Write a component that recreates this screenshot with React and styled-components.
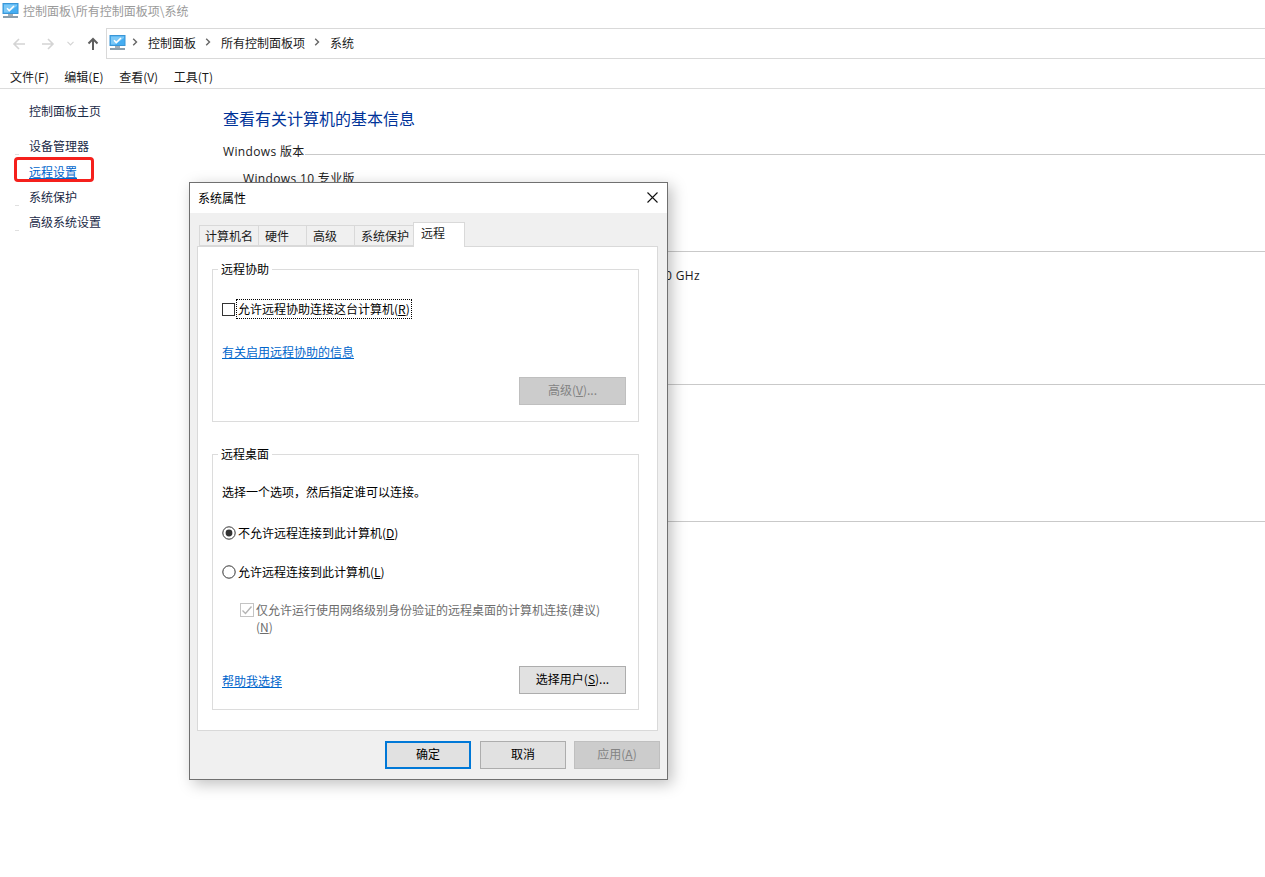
import React from 'react';
import styled, { createGlobalStyle } from 'styled-components';

const Global = createGlobalStyle`
  html, body { margin: 0; padding: 0; background: #fff; }
  body { font-family: "Noto Sans CJK SC", "Liberation Sans", sans-serif; font-size: 12px; color: #1a1a1a; }
  * { box-sizing: border-box; }
`;

const Page = styled.div`
  position: relative;
  width: 1265px;
  height: 877px;
  overflow: hidden;
  background: #fff;
`;

const TitleBar = styled.div`
  height: 28px;
  display: flex;
  align-items: center;
  gap: 4px;
  padding: 0 0 6px 2px;
  color: #9a9a9a;
  line-height: 16px;
`;

const NavBar = styled.div`
  height: 31px;
  display: flex;
  align-items: stretch;
`;

const NavButtons = styled.div`
  width: 106px;
  display: flex;
  align-items: center;
  padding-left: 12px;
`;

const NavIcon = styled.svg`
  display: block;
  flex: none;
  margin-right: ${(p) => p.$gap}px;
`;

const AddressBox = styled.div`
  flex: 1;
  display: flex;
  align-items: center;
  border: 1px solid #d9d9d9;
  border-right: 0;
  padding: 0 0 3px 2px;
  color: #1a1a1a;
`;

const AddressIcon = styled.span`
  display: block;
  margin-top: 2px;
`;

const Crumb = styled.span`
  margin-right: 9px;
`;

const CrumbArrow = styled.svg`
  display: block;
  flex: none;
  margin: 0 ${(p) => p.$after}px 0 ${(p) => p.$before}px;
`;

const MenuBar = styled.div`
  height: 30px;
  display: flex;
  align-items: center;
  gap: 15.6px;
  padding: 5px 0 0 10px;
  border-bottom: 1px solid #dcdcdc;
  font-size: 12px;
`;

const Content = styled.div`
  display: flex;
`;

const Sidebar = styled.nav`
  width: 223px;
  flex: none;
  padding: 13px 0 0 29px;
  display: flex;
  flex-direction: column;
`;

const SideItem = styled.a`
  position: relative;
  display: block;
  width: max-content;
  height: 25px;
  line-height: 18px;
  margin-bottom: ${(p) => p.$after || 0}px;
  color: ${(p) => (p.$active ? '#0066cc' : '#1b2a47')};
  text-decoration: ${(p) => (p.$active ? 'underline' : 'none')};
  &::before {
    content: ${(p) => (p.$mark ? '""' : 'none')};
    position: absolute;
    left: -14px;
    top: 17px;
    width: 4px;
    height: 1px;
    background: #e0e0e0;
  }
`;

const Highlight = styled.span`
  position: absolute;
  left: -15px;
  top: -6px;
  width: 80px;
  height: 25px;
  border: 3px solid #f5201c;
  border-radius: 4px;
`;

const Main = styled.main`
  flex: 1;
  padding-top: 17px;
`;

const Heading = styled.h1`
  margin: 0 0 13px;
  font-size: 16px;
  line-height: 24px;
  font-weight: 400;
  color: #003399;
`;

const Section = styled.section`
  height: ${(p) => p.$height}px;
`;

const SectionTitle = styled.div`
  display: flex;
  align-items: center;
  height: 18px;
  line-height: 18px;
  letter-spacing: 0.35px;
  font-family: "Open Sans", "Noto Sans CJK SC", sans-serif;
  &::after {
    content: "";
    flex: 1;
    height: 1px;
    margin-top: 4px;
    background: #c9c9c9;
  }
`;

const SectionText = styled.div`
  padding-left: 20px;
  margin-top: 9px;
  line-height: 18px;
  letter-spacing: 0.35px;
  font-family: "Open Sans", "Noto Sans CJK SC", sans-serif;
`;

const SpecRow = styled.div`
  width: 477px;
  margin-top: 9px;
  text-align: right;
  line-height: 18px;
  letter-spacing: 0.35px;
  font-family: "Open Sans", "Noto Sans CJK SC", sans-serif;
`;

const Dialog = styled.div`
  position: absolute;
  left: 189px;
  top: 182px;
  width: 479px;
  height: 598px;
  background: #f0f0f0;
  border: 1px solid #707070;
  box-shadow: 4px 4px 14px rgba(0, 0, 0, 0.25);
  color: #000;
`;

const DialogHead = styled.div`
  height: 30px;
  background: #fff;
  display: flex;
  align-items: center;
  justify-content: space-between;
  padding: 0 9px 2px 8px;
`;

const TabRow = styled.div`
  display: flex;
  align-items: flex-end;
  height: 24px;
  margin: 9px 0 0 9px;
`;

const Tab = styled.div`
  position: relative;
  width: ${(p) => p.$w}px;
  height: ${(p) => (p.$active ? 25 : 21)}px;
  margin-bottom: ${(p) => (p.$active ? -1 : 0)}px;
  margin-left: ${(p) => (p.$active ? -1 : 0)}px;
  padding-left: ${(p) => (p.$active ? 7 : p.$first ? 5 : 6)}px;
  line-height: ${(p) => (p.$active ? 20 : 19)}px;
  background: ${(p) => (p.$active ? '#fff' : '#f0f0f0')};
  border: 1px solid #d9d9d9;
  border-left-width: ${(p) => (p.$first || p.$active ? 1 : 0)}px;
  border-bottom-width: ${(p) => (p.$active ? 0 : 1)}px;
  z-index: ${(p) => (p.$active ? 1 : 0)};
  color: #1a1a1a;
`;

const Panel = styled.div`
  width: 461px;
  height: 485px;
  margin-left: 7px;
  padding: 22px 18px 0 14px;
  background: #fff;
  border: 1px solid #d9d9d9;
`;

const Group = styled.div`
  position: relative;
  height: ${(p) => p.$height}px;
  margin-bottom: ${(p) => p.$after || 0}px;
  padding: ${(p) => p.$top}px 12px 0 9px;
  border: 1px solid #dcdcdc;
`;

const Legend = styled.span`
  position: absolute;
  left: 5px;
  top: -9px;
  padding: 0 3px;
  background: #fff;
  line-height: 16px;
`;

const Option = styled.div`
  display: flex;
  align-items: ${(p) => (p.$top ? 'flex-start' : 'center')};
  height: ${(p) => p.$h || 18}px;
  margin-top: ${(p) => p.$mt || 0}px;
  margin-left: ${(p) => p.$ml || 0}px;
  gap: 2px;
  line-height: 18px;
  color: ${(p) => (p.$muted ? '#6d6d6d' : '#000')};
`;

const Focused = styled.span`
  display: block;
  height: 18px;
  outline: 1px dotted #000;
  outline-offset: 0;
  padding: 0 1px;
`;

const CheckBox = styled.span`
  display: block;
  flex: none;
  width: 13px;
  height: 13px;
  border: 1px solid #333;
  background: #fff;
`;

const Link = styled.a`
  display: block;
  width: max-content;
  margin-top: ${(p) => p.$mt || 0}px;
  color: #0066cc;
  text-decoration: underline;
  line-height: 18px;
`;

const ButtonRow = styled.div`
  display: flex;
  justify-content: ${(p) => (p.$between ? 'space-between' : 'flex-end')};
  align-items: center;
  margin-top: ${(p) => p.$mt}px;
`;

const Btn = styled.button`
  width: ${(p) => p.$w || 107}px;
  height: 28px;
  padding: 0 0 2px;
  font: inherit;
  line-height: 18px;
  border: ${(p) => (p.$primary ? '2px solid #0078d7' : p.$disabled ? '1px solid #bfbfbf' : '1px solid #adadad')};
  background: ${(p) => (p.$disabled ? '#cccccc' : '#e1e1e1')};
  color: ${(p) => (p.$disabled ? '#838383' : '#000')};
`;

const Footer = styled.div`
  display: flex;
  justify-content: flex-end;
  gap: 9px;
  padding: 10px 7px 0 0;
  & > :last-child { margin-left: -1px; }
`;

const Wrapped = styled.span`
  width: 360px;
  line-height: 17px;
`;

const Monitor = () => (
  <svg width="17" height="16" viewBox="0 0 17 16" style={{ display: 'block', flex: 'none' }}>
    <rect x="1" y="0.5" width="15" height="10" fill="#45adf2" stroke="#3a96d6" />
    <path d="M2 1.500h13v1.500L6 9.500H2z" fill="#7cc8f6" />
    <path d="M5 5.300l2.300 2.300L12 3" fill="none" stroke="#fff" strokeWidth="1.5" />
    <rect x="6" y="11" width="5" height="2" fill="#a3adb5" />
    <rect x="1" y="13" width="15" height="2" fill="#8a9eac" />
  </svg>
);

const Arrow = ({ dir, color, gap, weight = 1.6 }) => (
  <NavIcon $gap={gap} width="14" height="14" viewBox="0 0 14 14" fill="none" stroke={color} strokeWidth={weight}>
    {dir === 'left' && <path d="M13 7H2M7 2L2 7l5 5" />}
    {dir === 'right' && <path d="M1 7h11M7 2l5 5-5 5" />}
    {dir === 'up' && <path d="M7 13V2M2.500 6.500L7 2l4.500 4.500" />}
  </NavIcon>
);

const Chevron = ({ before, after }) => (
  <CrumbArrow $before={before} $after={after} width="6" height="8" viewBox="0 0 6 8" fill="none" stroke="#666" strokeWidth="1.4">
    <path d="M1.2 0.8L4.500 4 1.2 7.2" />
  </CrumbArrow>
);

const Radio = ({ on }) => (
  <svg width="14" height="14" viewBox="0 0 14 14" style={{ display: 'block', flex: 'none' }}>
    <circle cx="7" cy="7" r="6.2" fill="#fff" stroke="#333" />
    {on && <circle cx="7" cy="7" r="3.4" fill="#333" />}
  </svg>
);

const CheckedMuted = () => (
  <svg width="14" height="14" viewBox="0 0 14 14" style={{ display: 'block', flex: 'none', marginTop: 2 }}>
    <rect x="0.5" y="0.5" width="13" height="13" fill="#fff" stroke="#c4c4c4" />
    <path d="M2.500 7.500l3 3 6-7" fill="none" stroke="#b4b4b4" strokeWidth="1.4" />
  </svg>
);

export default function App() {
  return (
    <Page>
      <Global />
      <TitleBar>
        <Monitor />
        <span>控制面板\所有控制面板项\系统</span>
      </TitleBar>
      <NavBar>
        <NavButtons>
          <Arrow dir="left" color="#d4d4d4" gap={15} />
          <Arrow dir="right" color="#d4d4d4" gap={12} />
          <NavIcon $gap={12} width="7" height="5" viewBox="0 0 7 5" fill="none" stroke="#d4d4d4" strokeWidth="1.2">
            <path d="M0.500 0.800l3 3 3-3" />
          </NavIcon>
          <Arrow dir="up" color="#5f5f5f" gap={0} weight={2} />
        </NavButtons>
        <AddressBox>
          <AddressIcon><Monitor /></AddressIcon>
          <Chevron before={6} after={10} />
          <Crumb>控制面板</Crumb>
          <Chevron before={0} after={10} />
          <Crumb>所有控制面板项</Crumb>
          <Chevron before={0} after={10} />
          <span>系统</span>
        </AddressBox>
      </NavBar>
      <MenuBar>
        <span>文件(F)</span>
        <span>编辑(E)</span>
        <span>查看(V)</span>
        <span>工具(T)</span>
      </MenuBar>
      <Content>
        <Sidebar>
          <SideItem $after={10}>控制面板主页</SideItem>
          <SideItem $mark $after={1}>设备管理器</SideItem>
          <SideItem $active>
            远程设置
            <Highlight />
          </SideItem>
          <SideItem $mark>系统保护</SideItem>
          <SideItem $mark>高级系统设置</SideItem>
        </Sidebar>
        <Main>
          <Heading>查看有关计算机的基本信息</Heading>
          <Section $height={97}>
            <SectionTitle>Windows 版本</SectionTitle>
            <SectionText>Windows 10 专业版</SectionText>
          </Section>
          <Section $height={133}>
            <SectionTitle>系统</SectionTitle>
            <SpecRow>3.00 GHz</SpecRow>
          </Section>
          <Section $height={137}>
            <SectionTitle>计算机名</SectionTitle>
          </Section>
          <Section $height={40}>
            <SectionTitle>Windows 激活</SectionTitle>
          </Section>
        </Main>
      </Content>
      <Dialog>
        <DialogHead>
          <span>系统属性</span>
          <svg width="11" height="11" viewBox="0 0 11 11" stroke="#111" strokeWidth="1.1" fill="none">
            <path d="M0.500 0.500l10 10M10.500 0.500l-10 10" />
          </svg>
        </DialogHead>
        <TabRow>
          <Tab $w={60} $first>计算机名</Tab>
          <Tab $w={48}>硬件</Tab>
          <Tab $w={48}>高级</Tab>
          <Tab $w={59}>系统保护</Tab>
          <Tab $w={52} $active>远程</Tab>
        </TabRow>
        <Panel>
          <Group $height={153} $after={32} $top={30}>
            <Legend>远程协助</Legend>
            <Option>
              <CheckBox />
              <Focused>允许远程协助连接这台计算机(<u>R</u>)</Focused>
            </Option>
            <Link $mt={25}>有关启用远程协助的信息</Link>
            <ButtonRow $mt={16}>
              <Btn $disabled>高级(<u>V</u>)...</Btn>
            </ButtonRow>
          </Group>
          <Group $height={256} $top={28}>
            <Legend>远程桌面</Legend>
            <Option>选择一个选项，然后指定谁可以连接。</Option>
            <Option $mt={23}>
              <Radio on />
              <span>不允许远程连接到此计算机(<u>D</u>)</span>
            </Option>
            <Option $mt={21}>
              <Radio />
              <span>允许远程连接到此计算机(<u>L</u>)</span>
            </Option>
            <Option $top $muted $mt={20} $ml={18} $h={35}>
              <CheckedMuted />
              <Wrapped>仅允许运行使用网络级别身份验证的远程桌面的计算机连接(建议)(<u>N</u>)</Wrapped>
            </Option>
            <ButtonRow $between $mt={30}>
              <Link $mt={2}>帮助我选择</Link>
              <Btn>选择用户(<u>S</u>)...</Btn>
            </ButtonRow>
          </Group>
        </Panel>
        <Footer>
          <Btn $w={86} $primary>确定</Btn>
          <Btn $w={86}>取消</Btn>
          <Btn $w={86} $disabled>应用(<u>A</u>)</Btn>
        </Footer>
      </Dialog>
    </Page>
  );
}
